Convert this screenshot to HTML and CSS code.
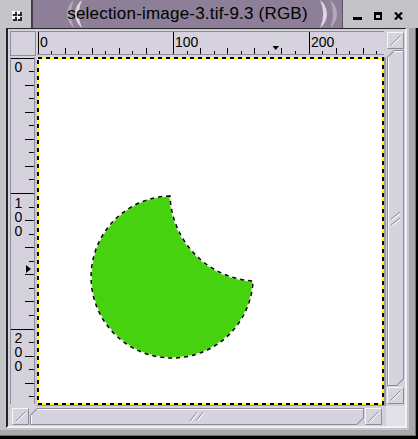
FILE: index.html
```html
<!DOCTYPE html>
<html>
<head>
<meta charset="utf-8">
<title>selection-image-3.tif-9.3 (RGB)</title>
<link rel="stylesheet" href="styles.css">
</head>
<body>
<div class="window">
  <div class="titlebar">
    <div class="tb-menu">
      <svg class="menu-icon" width="10" height="10" viewBox="0 0 10 10">
        <rect x="1" y="1" width="4" height="4" fill="#2b2b2b"/>
        <rect x="6" y="1" width="4" height="4" fill="#2b2b2b"/>
        <rect x="1" y="6" width="4" height="4" fill="#2b2b2b"/>
        <rect x="6" y="6" width="4" height="4" fill="#2b2b2b"/>
        <rect x="0" y="0" width="3" height="3" fill="#fff"/>
        <rect x="5" y="0" width="3" height="3" fill="#fff"/>
        <rect x="0" y="5" width="3" height="3" fill="#fff"/>
        <rect x="5" y="5" width="3" height="3" fill="#fff"/>
      </svg>
    </div>
    <div class="tb-title">
      <svg class="crescents" width="309" height="28" viewBox="0 0 309 28">
        <path d="M41 0 A17.5 17.5 0 0 0 41 28 A34.2 34.2 0 0 1 41 0 Z" fill="#b3a9bb"/>
        <path d="M49 0 A17.5 17.5 0 0 0 49 28 A34.2 34.2 0 0 1 49 0 Z" fill="#ddd7e2"/>
        <path d="M287 0 A17.5 17.5 0 0 1 287 28 A34.2 34.2 0 0 0 287 0 Z" fill="#ddd7e2"/>
        <path d="M297 0 A17.5 17.5 0 0 1 297 28 A34.2 34.2 0 0 0 297 0 Z" fill="#b3a9bb"/>
      </svg>
      <span class="title-text">selection-image-3.tif-9.3 (RGB)</span>
    </div>
    <div class="tb-buttons">
      <span class="btn-min"></span>
      <span class="btn-max"></span>
      <svg class="btn-close" width="9" height="8" viewBox="0 0 9 8">
        <path d="M1 0.5 L8 7.5 M8 0.5 L1 7.5" stroke="#000" stroke-width="2.2"/>
      </svg>
    </div>
  </div>
  <div class="body">
    <div class="body-in">
      <div class="frame">
        <div class="client">
          <div class="corner"></div>

          <svg class="hruler" width="349" height="26" viewBox="0 0 349 26">
            <rect x="0" y="0" width="347" height="26" fill="#d5d2dd"/>
            <path d="M0 0.5H347 M0 23.5H347" stroke="#8e8b9b"/>
            <path d="M14.5 20V23 M41.5 20V23 M68.5 20V23 M95.5 20V23 M122.5 20V23 M150.5 20V23 M177.5 20V23 M204.5 20V23 M231.5 20V23 M258.5 20V23 M285.5 20V23 M312.5 20V23 M339.5 20V23" stroke="#000"/>
            <path d="M28.5 17V23 M55.5 17V23 M82.5 17V23 M109.5 17V23 M163.5 17V23 M190.5 17V23 M217.5 17V23 M244.5 17V23 M299.5 17V23 M326.5 17V23" stroke="#000"/>
            <path d="M1.5 1V23 M136.5 1V23 M272.5 1V23" stroke="#000"/>
            <text class="ruler-num" x="3" y="16">0</text>
            <text class="ruler-num" x="138" y="16">100</text>
            <text class="ruler-num" x="274" y="16">200</text>
            <polygon points="235.5,15 242,15 238.75,19" fill="#000"/>
          </svg>

          <div class="vscroll">
            <div class="sb-btn">
              <svg width="13" height="13" viewBox="0 0 13 13"><path d="M1.5 11.5 L11.5 1.5" stroke="#8e8b9b"/><path d="M2.5 12 L12 2.5" stroke="#fff"/></svg>
            </div>
            <div class="slider">
              <div class="slider-in">
                <svg width="11" height="15" viewBox="0 0 11 15"><path d="M1 8 L10 1 M1 14 L10 7" stroke="#8e8b9b"/><path d="M2 9 L10 2.5 M2 15 L10 8.5" stroke="#fff"/></svg>
              </div>
            </div>
            <div class="sb-btn">
              <svg width="13" height="13" viewBox="0 0 13 13"><path d="M1.5 11.5 L11.5 1.5" stroke="#8e8b9b"/><path d="M2.5 12 L12 2.5" stroke="#fff"/></svg>
            </div>
          </div>

          <svg class="vruler" width="27" height="349" viewBox="0 0 27 349">
            <rect x="0" y="0" width="25" height="347" fill="#d5d2dd"/>
            <rect x="25" y="0" width="2" height="349" fill="#c9c6d2"/>
            <path d="M0.5 0V347 M24.5 0V347" stroke="#8e8b9b"/>
            <path d="M19 14.5H24 M19 41.5H24 M19 68.5H24 M19 95.5H24 M19 122.5H24 M19 150.5H24 M19 177.5H24 M19 204.5H24 M19 231.5H24 M19 258.5H24 M19 285.5H24 M19 312.5H24 M19 339.5H24" stroke="#000"/>
            <path d="M15 28.5H24 M15 55.5H24 M15 82.5H24 M15 109.5H24 M15 163.5H24 M15 190.5H24 M15 217.5H24 M15 244.5H24 M15 299.5H24 M15 326.5H24" stroke="#000"/>
            <path d="M1 1.5H24 M1 136.5H24 M1 272.5H24" stroke="#000"/>
            <text class="ruler-num" x="8.5" y="15" text-anchor="middle">0</text>
            <text class="ruler-num vnum" x="8.5" y="137.5">100</text>
            <text class="ruler-num vnum" x="8.5" y="272.5">200</text>
            <polygon points="16,208 16,216 21,212" fill="#000"/>
          </svg>

          <div class="canvas">
            <svg class="image" width="349" height="349" viewBox="0 0 349 349">
              <rect x="0" y="0" width="347" height="348" fill="#fff"/>
              <rect x="1" y="1" width="345" height="346" fill="none" stroke="#ffff00" stroke-width="2"/>
              <rect x="1" y="1" width="345" height="346" fill="none" stroke="#000" stroke-width="2" stroke-dasharray="4 4"/>
              <path d="M133 139 A81 81 0 1 0 216 224 A88.5 88.5 0 0 1 133 139 Z" fill="#46d20f" stroke="#e6f7dc" stroke-width="1.5"/>
              <path d="M133 139 A81 81 0 1 0 216 224 A88.5 88.5 0 0 1 133 139 Z" fill="none" stroke="#000" stroke-width="1.5" stroke-dasharray="4 4"/>
            </svg>
          </div>

          <div class="hscroll">
            <div class="sb-btn">
              <svg width="13" height="13" viewBox="0 0 13 13"><path d="M1.5 11.5 L11.5 1.5" stroke="#8e8b9b"/><path d="M2.5 12 L12 2.5" stroke="#fff"/></svg>
            </div>
            <div class="slider">
              <div class="slider-in">
                <svg width="16" height="11" viewBox="0 0 16 11"><path d="M1 10 L8 1 M7 10 L14 1" stroke="#8e8b9b"/><path d="M2 10.5 L9 1.5 M8 10.5 L15 1.5" stroke="#fff"/></svg>
              </div>
            </div>
            <div class="sb-btn">
              <svg width="13" height="13" viewBox="0 0 13 13"><path d="M1.5 11.5 L11.5 1.5" stroke="#8e8b9b"/><path d="M2.5 12 L12 2.5" stroke="#fff"/></svg>
            </div>
          </div>

          <div class="sizegrip"></div>
        </div>
      </div>
    </div>
  </div>
</div>
</body>
</html>
```

FILE: styles.css
```css
html, body {
  margin: 0;
  padding: 0;
  background: #c4c3c8;
}

.window {
  width: 418px;
  height: 439px;
  display: flex;
  flex-direction: column;
  overflow: hidden;
  font-family: "Liberation Sans", Arial, sans-serif;
}

/* ---------- title bar ---------- */
.titlebar {
  height: 28px;
  flex: none;
  display: flex;
}

.tb-menu {
  width: 33px;
  box-sizing: border-box;
  background: #c6c5ca;
  border-right: 2px solid #3f3f44;
  padding: 11px 0 0 12px;
}

.menu-icon {
  display: block;
}

.tb-title {
  flex: 1;
  position: relative;
  background: #8c7f97;
  display: flex;
  justify-content: center;
  align-items: center;
}

.crescents {
  position: absolute;
  left: 0;
  top: 0;
}

.title-text {
  position: relative;
  font-size: 17px;
  line-height: 28px;
  letter-spacing: 0.2px;
  color: #000;
  white-space: nowrap;
}

.tb-buttons {
  width: 76px;
  box-sizing: border-box;
  border-left: 1px solid #5e5566;
  background: #c3c2c7;
  display: flex;
  align-items: flex-end;
  gap: 12px;
  padding: 0 0 8px 10px;
}

.btn-min {
  width: 9px;
  height: 3px;
  background: #000;
}

.btn-max {
  width: 8px;
  height: 8px;
  box-sizing: border-box;
  border: 2px solid #000;
  border-top-width: 3px;
}

.btn-close {
  display: block;
}

/* ---------- window frame ---------- */
.body {
  flex: 1;
  display: flex;
  background: #a9a8ad;
  border-right: 2px solid #000;
  border-bottom: 3px solid #000;
}

.body-in {
  flex: 1;
  display: flex;
  border-right: 1px solid #6d6d72;
  border-bottom: 1px solid #6d6d72;
  padding: 0 6px 5px 0;
}

.frame {
  flex: 1;
  display: flex;
  background: #c4c3c8;
  padding: 0 2px 2px 6px;
}

.client {
  flex: 1;
  display: grid;
  grid-template-columns: 27px 349px 19px;
  grid-template-rows: 26px 349px 20px;
  background: #d3d1d9;
  border-style: solid;
  border-width: 1px 2px 2px 2px;
  border-color: #232326 #f2f1f5 #f2f1f5 #232326;
  padding: 2px 0 0 2px;
}

/* ---------- rulers ---------- */
.corner {
  grid-row: 1;
  grid-column: 1;
  background: #d5d2dd;
  border: 1px solid #8e8b9b;
  margin: 0 1px 1px 0;
}

.hruler {
  grid-row: 1;
  grid-column: 2;
  display: block;
}

.vruler {
  grid-row: 2;
  grid-column: 1;
  display: block;
}

.ruler-num {
  font-family: "Liberation Sans", Arial, sans-serif;
  font-size: 14px;
  fill: #000;
}

.vnum {
  writing-mode: vertical-lr;
  text-orientation: upright;
  letter-spacing: -2px;
}

/* ---------- canvas ---------- */
.canvas {
  grid-row: 2;
  grid-column: 2;
  background: #9d9aa9;
}

.image {
  display: block;
}

/* ---------- scrollbars ---------- */
.vscroll {
  grid-row: 1 / 3;
  grid-column: 3;
  display: flex;
  flex-direction: column;
  gap: 1px;
  padding: 1px 1px 2px 1px;
  background: #d3d1d9;
}

.hscroll {
  grid-row: 3;
  grid-column: 1 / 3;
  display: flex;
  gap: 1px;
  padding: 2px 4px 1px 2px;
  background: #d3d1d9;
}

.sb-btn {
  width: 17px;
  height: 17px;
  flex: none;
  box-sizing: border-box;
  background: #d6d3de;
  border: 1px solid;
  border-color: #f6f5f9 #8e8b9b #8e8b9b #f6f5f9;
  display: flex;
  align-items: center;
  justify-content: center;
}

.sb-btn svg {
  display: block;
}

.slider {
  flex: 1;
  display: flex;
  padding: 1px;
  background: #8e8b9b;
  clip-path: polygon(7px 0, 100% 0, 100% calc(100% - 7px), calc(100% - 7px) 100%, 0 100%, 0 7px);
}

.slider-in {
  flex: 1;
  display: flex;
  align-items: center;
  justify-content: center;
  background: #d6d3de;
  box-shadow: inset 1px 1px 0 #fbfbfd;
  clip-path: polygon(6.4px 0, 100% 0, 100% calc(100% - 6.4px), calc(100% - 6.4px) 100%, 0 100%, 0 6.4px);
}

.slider-in svg {
  display: block;
}

.sizegrip {
  grid-row: 3;
  grid-column: 3;
  background: #e2e0e8;
}
```
